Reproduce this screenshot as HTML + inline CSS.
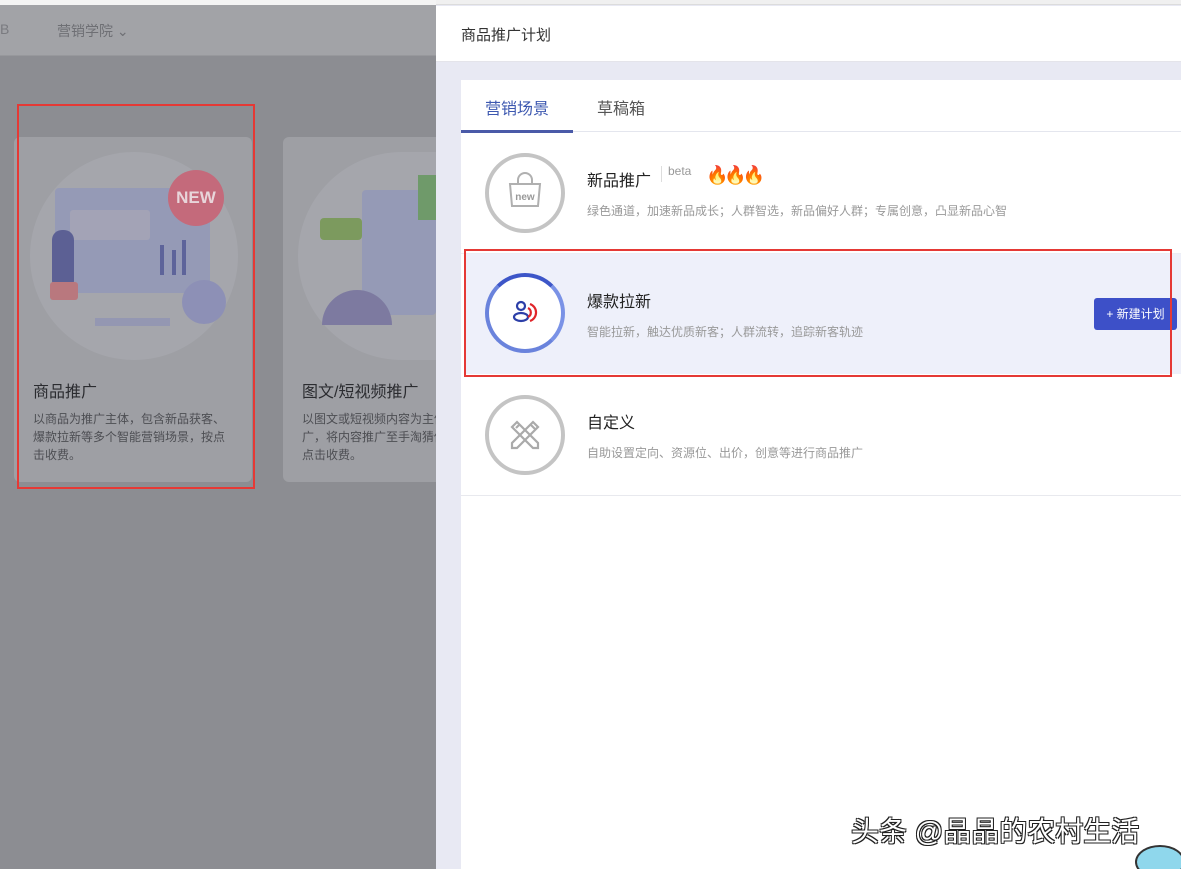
<!DOCTYPE html>
<html><head><meta charset="utf-8"><style>
*{margin:0;padding:0;box-sizing:border-box}
html,body{width:1181px;height:869px;overflow:hidden}
body{position:relative;background:#8c8d92;font-family:"Liberation Sans","Noto Sans CJK SC",sans-serif}
.abs{position:absolute}
</style></head><body>
<div class="abs" style="left:0;top:0;width:436px;height:5px;background:#f4f4f4"></div>
<div class="abs" style="left:0;top:5px;width:436px;height:51px;background:#a2a3a7;border-bottom:1px solid #97989c"></div>
<div class="abs" style="left:0;top:21px;font-size:14px;color:#7a7b80">B</div>
<div class="abs" style="left:57px;top:21px;font-size:14px;color:#6e6f74">营销学院 ⌄</div>
<!-- card 1 -->
<div class="abs" style="left:14px;top:137px;width:238px;height:345px;background:#9e9fa4;border-radius:6px"></div>
<div class="abs" style="left:30px;top:152px;width:208px;height:208px;border-radius:50%;background:#a5a6ac"></div>
<div class="abs" style="left:55px;top:188px;width:155px;height:105px;background:#959ab6;border-radius:4px"></div>
<div class="abs" style="left:70px;top:210px;width:80px;height:30px;background:#a3a3b6;border-radius:3px"></div>
<div class="abs" style="left:160px;top:245px;width:4px;height:30px;background:#5e649a"></div>
<div class="abs" style="left:172px;top:250px;width:4px;height:25px;background:#5e649a"></div>
<div class="abs" style="left:182px;top:240px;width:4px;height:35px;background:#5e649a"></div>
<div class="abs" style="left:95px;top:318px;width:75px;height:8px;background:#9497b2"></div>
<div class="abs" style="left:168px;top:170px;width:56px;height:56px;border-radius:50%;background:#c46a7b;color:#e8d5da;font-weight:bold;font-size:17px;text-align:center;line-height:56px">NEW</div>
<div class="abs" style="left:182px;top:280px;width:44px;height:44px;border-radius:50%;background:#8d90b6"></div>
<div class="abs" style="left:52px;top:230px;width:22px;height:55px;background:#5c6094;border-radius:10px 10px 4px 4px"></div>
<div class="abs" style="left:50px;top:282px;width:28px;height:18px;background:#b9787e;border-radius:3px"></div>
<div class="abs" style="left:33px;top:378px;font-size:16px;color:#2b2c30">商品推广</div>
<div class="abs" style="left:33px;top:410px;width:200px;font-size:12px;line-height:18px;color:#4d4e53">以商品为推广主体，包含新品获客、爆款拉新等多个智能营销场景，按点击收费。</div>
<div class="abs" style="left:17px;top:104px;width:238px;height:385px;border:2px solid #e53935"></div>
<!-- card 2 -->
<div class="abs" style="left:283px;top:137px;width:160px;height:345px;background:#9e9fa4;border-radius:6px"></div>
<div class="abs" style="left:298px;top:152px;width:160px;height:208px;border-radius:104px 0 0 104px;background:#a5a6ac"></div>
<div class="abs" style="left:362px;top:190px;width:74px;height:125px;background:#959ab6;border-radius:4px"></div>
<div class="abs" style="left:322px;top:290px;width:70px;height:35px;border-radius:35px 35px 0 0;background:#7d7aa0"></div>
<div class="abs" style="left:320px;top:218px;width:42px;height:22px;background:#7c9a5e;border-radius:4px"></div>
<div class="abs" style="left:418px;top:175px;width:18px;height:45px;background:#6f9a6a"></div>
<div class="abs" style="left:302px;top:378px;font-size:16px;color:#2b2c30;white-space:nowrap">图文/短视频推广</div>
<div class="abs" style="left:302px;top:410px;width:220px;font-size:12px;line-height:18px;color:#4d4e53;white-space:nowrap">以图文或短视频内容为主体推<br>广，将内容推广至手淘猜你喜欢，<br>点击收费。</div>
<!-- right panel -->
<div class="abs" style="left:436px;top:0;width:745px;height:869px;background:#e8e9f3"></div>
<div class="abs" style="left:436px;top:0;width:745px;height:5px;background:#f0f0f0;border-bottom:1px solid #dcdcdc"></div>
<div class="abs" style="left:436px;top:6px;width:745px;height:56px;background:#fff;border-bottom:1px solid #e4e4ea"></div>
<div class="abs" style="left:461px;top:24px;font-size:15px;color:#333">商品推广计划</div>
<div class="abs" style="left:461px;top:80px;width:720px;height:789px;background:#fff"></div>
<div class="abs" style="left:461px;top:131px;width:720px;height:1px;background:#e4e6ee"></div>
<div class="abs" style="left:461px;top:130px;width:112px;height:3px;background:#4a5aa8"></div>
<div class="abs" style="left:485px;top:95px;font-size:16px;color:#3d58b0">营销场景</div>
<div class="abs" style="left:597px;top:95px;font-size:16px;color:#555">草稿箱</div>
<!-- row 1 -->
<div class="abs" style="left:485px;top:153px;width:80px;height:80px;border-radius:50%;border:4px solid #c4c4c4"></div>
<svg class="abs" style="left:506px;top:172px" width="38" height="40" viewBox="0 0 38 40" fill="none" stroke="#b0b0b0" stroke-width="2"><path d="M12 12 V8 a7 7 0 0 1 14 0 V12"/><path d="M4 12 H34 L32 34 H6 Z"/><text x="19" y="28" font-size="10" fill="#999" stroke="none" text-anchor="middle" font-family="Liberation Sans" font-weight="bold">new</text></svg>
<div class="abs" style="left:587px;top:167px;font-size:16px;color:#222">新品推广</div>
<div class="abs" style="left:661px;top:166px;width:1px;height:16px;background:#ddd"></div>
<div class="abs" style="left:668px;top:164px;font-size:12px;color:#999">beta</div>
<div class="abs" style="left:706px;top:165px;font-size:18px;color:#f04a10;letter-spacing:-4px">🔥🔥🔥</div>
<div class="abs" style="left:587px;top:202px;font-size:12px;color:#999">绿色通道，加速新品成长；人群智选，新品偏好人群；专属创意，凸显新品心智</div>
<div class="abs" style="left:461px;top:253px;width:720px;height:1px;background:#eceef4"></div>
<!-- row 2 -->
<div class="abs" style="left:464px;top:254px;width:717px;height:120px;background:#eef0fa"></div>
<div class="abs" style="left:485px;top:273px;width:80px;height:80px;border-radius:50%;border:4px solid #6a83dc;border-top-color:#3d56c8;border-right-color:#7a92e6;background:#fff"></div>
<svg class="abs" style="left:508px;top:296px" width="34" height="34" viewBox="0 0 34 34" fill="none" stroke-width="2.2"><circle cx="13" cy="10" r="4" stroke="#2c3fa8"/><ellipse cx="13" cy="21" rx="7" ry="4" stroke="#2c3fa8"/><path d="M22 8 a9 9 0 0 1 0 17" stroke="#e0252a"/><path d="M20 12 a5 5 0 0 1 0 9" stroke="#e0252a"/></svg>
<div class="abs" style="left:587px;top:288px;font-size:16px;color:#222">爆款拉新</div>
<div class="abs" style="left:587px;top:323px;font-size:12px;color:#999">智能拉新，触达优质新客；人群流转，追踪新客轨迹</div>
<div class="abs" style="left:1094px;top:298px;width:83px;height:32px;background:#3d50c8;border-radius:3px;color:#fff;font-size:12px;text-align:center;line-height:32px">+ 新建计划</div>
<div class="abs" style="left:464px;top:249px;width:708px;height:128px;border:2px solid #e53935"></div>
<!-- row 3 -->
<div class="abs" style="left:485px;top:395px;width:80px;height:80px;border-radius:50%;border:4px solid #c4c4c4"></div>
<svg class="abs" style="left:505px;top:415px" width="40" height="40" viewBox="0 0 40 40" fill="none" stroke="#aaa" stroke-width="2.2"><path d="M7 12 L12 7 L33 28 L33 33 L28 33 Z"/><path d="M28 7 L33 12 L12 33 L7 33 L7 28 Z"/><path d="M11 13 L15 9"/><path d="M25 9 L31 15"/></svg>
<div class="abs" style="left:587px;top:409px;font-size:16px;color:#222">自定义</div>
<div class="abs" style="left:587px;top:444px;font-size:12px;color:#999">自助设置定向、资源位、出价，创意等进行商品推广</div>
<div class="abs" style="left:461px;top:495px;width:720px;height:1px;background:#e8e9ee"></div>
<!-- watermark -->
<div class="abs" style="left:851px;top:810px;font-size:28px;color:#fff;text-shadow:1px 1px 0 #222,-1px -1px 0 #222,1px -1px 0 #222,-1px 1px 0 #222;white-space:nowrap">头条 @晶晶的农村生活</div>
<div class="abs" style="left:1135px;top:845px;width:50px;height:34px;border-radius:50%;background:#8fd7ec;border:2px solid #333"></div>
</body></html>
